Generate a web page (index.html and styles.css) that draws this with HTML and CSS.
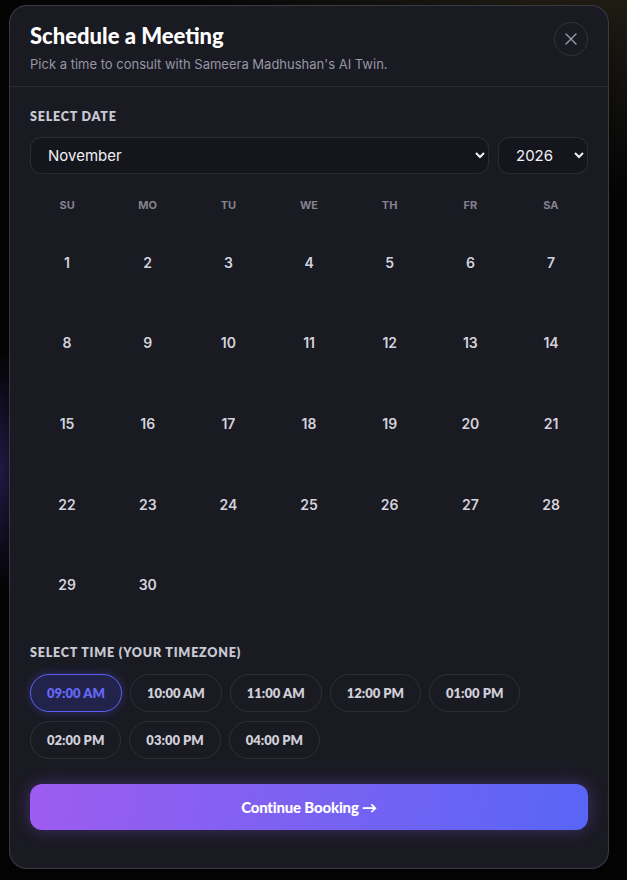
FILE: index.html
```html
<!DOCTYPE html>
<html>
<head>
<meta charset="utf-8">
<meta name="viewport" content="width=device-width, initial-scale=1">
<title>Schedule a Meeting</title>
<link rel="stylesheet" href="styles.css">
</head>
<body>
<div class="modal">
  <div class="modalHead">
    <div>
      <h2 class="modalTitle">Schedule a Meeting</h2>
      <p class="modalSub">Pick a time to consult with Sameera Madhushan's AI Twin.</p>
    </div>
    <button class="closeBtn" title="Close">
      <svg width="14" height="14" viewBox="0 0 14 14"><path d="M2 2L12 12M12 2L2 12" stroke="#9a9aa8" stroke-width="1.4" stroke-linecap="round"/></svg>
    </button>
  </div>
  <div class="modalBody">
    <div class="label">Select Date</div>
    <div class="pickRow">
      <select class="pick month" id="month">
        <option>January</option><option>February</option><option>March</option>
        <option>April</option><option>May</option><option>June</option>
        <option>July</option><option>August</option><option>September</option>
        <option>October</option><option selected>November</option><option>December</option>
      </select>
      <select class="pick year" id="year">
        <option>2025</option><option selected>2026</option><option>2027</option>
      </select>
    </div>
    <div class="weekRow">
      <span>Su</span><span>Mo</span><span>Tu</span><span>We</span><span>Th</span><span>Fr</span><span>Sa</span>
    </div>
    <div class="days" id="days"></div>

    <div class="label timeLabel">Select Time (Your Timezone)</div>
    <div class="slots" id="slots"></div>

    <button class="goBtn">Continue Booking &rarr;</button>
  </div>
</div>
<script>
  // fill the month grid, nov 2026 starts on a sunday
  var daysEl = document.getElementById("days");
  var first = new Date(2026, 10, 1).getDay();
  var count = new Date(2026, 11, 0).getDate();
  for (var i = 0; i < first; i++) {
    daysEl.appendChild(document.createElement("span"));
  }
  for (var d = 1; d <= count; d++) {
    var c = document.createElement("span");
    c.className = "day";
    c.textContent = d;
    daysEl.appendChild(c);
  }

  var times = ["09:00 AM","10:00 AM","11:00 AM","12:00 PM","01:00 PM","02:00 PM","03:00 PM","04:00 PM"];
  var slotsEl = document.getElementById("slots");
  times.forEach(function(t, n){
    var b = document.createElement("button");
    b.className = "slot" + (n == 0 ? " picked" : "");
    b.textContent = t;
    b.onclick = function(){
      document.querySelectorAll(".slot").forEach(function(s){ s.classList.remove("picked"); });
      b.classList.add("picked");
    };
    slotsEl.appendChild(b);
  });
</script>
</body>
</html>
```

FILE: styles.css
```css
*{box-sizing:border-box;}
html,body{height:100%;}
body{
  margin:0;
  font-family:Inter,"Liberation Sans",sans-serif;
  background:
    radial-gradient(ellipse 60px 120px at 0px 470px, rgba(70,55,150,0.55), transparent),
    radial-gradient(ellipse 400px 200px at 560px 0px, rgba(40,36,26,0.9), transparent),
    #050506;
  color:#e6e6ee;
  overflow:hidden;
}
.modal{
  width:600px;
  margin:5px 0 0 9px;
  height:864px;
  background:#1a1a23;
  border:1px solid rgba(255,255,255,0.14);
  border-radius:18px;
  box-shadow:0 10px 40px rgba(0,0,0,0.6);
}
.modalHead{
  display:flex;
  justify-content:space-between;
  align-items:flex-start;
  padding:16px 20px 13px 20px;
  border-bottom:1px solid rgba(255,255,255,0.08);
}
.modalTitle{
  margin:0;
  font-family:Lato,"Liberation Sans",sans-serif;
  font-weight:900;
  font-size:22px;
  line-height:28px;
  color:#fff;
}
.modalSub{
  margin:5px 0 0;
  font-size:13px;
  line-height:18px;
  color:#9696a4;
}
.closeBtn{
  width:34px;height:34px;
  border-radius:50%;
  border:1px solid rgba(255,255,255,0.1);
  background:transparent;
  display:flex;align-items:center;justify-content:center;
  padding:0;
  cursor:pointer;
}
.modalBody{
  padding:22px 20px 0 20px;
}
.label{
  font-family:Lato,"Liberation Sans",sans-serif;
  font-weight:800;
  font-size:12.5px;
  line-height:16px;
  letter-spacing:0.8px;
  text-transform:uppercase;
  color:#c9c9d3;
}
.pickRow{
  display:flex;
  gap:9px;
  margin-top:12px;
}
.pick{
  height:37px;
  color-scheme:dark;
  background:#15151d;
  color:#f1f1f5;
  border:1px solid rgba(255,255,255,0.09);
  border-radius:11px;
  font-family:Inter,"Liberation Sans",sans-serif;
  font-size:15px;
  padding:0 6px 0 13px;
}
.month{flex:1;}
.year{width:90px;}
.weekRow,.days{
  display:grid;
  grid-template-columns:repeat(7,1fr);
  column-gap:6.5px;
}
.weekRow{
  margin-top:20px;
  height:21px;
  align-items:center;
  text-align:center;
  font-size:11px;
  font-weight:700;
  color:#83838f;
  text-transform:uppercase;
}
.days{
  margin-top:10px;
  row-gap:6.5px;
}
.days span{
  aspect-ratio:1;
  display:flex;align-items:center;justify-content:center;
  font-size:14px;
  font-weight:600;
  color:#d3d3dc;
  border-radius:12px;
}
.timeLabel{margin-top:23px;}
.slots{
  display:flex;
  flex-wrap:wrap;
  gap:9px 8px;
  margin-top:13px;
}
.slot{
  height:38px;
  padding:0 16px;
  border-radius:19px;
  border:1px solid rgba(255,255,255,0.09);
  background:transparent;
  color:#cfcfd8;
  font-family:Lato,"Liberation Sans",sans-serif;
  font-weight:800;
  font-size:13px;
  cursor:pointer;
}
.slot.picked{
  border-color:#5b5ff0;
  background:#22234a;
  color:#6468f5;
  box-shadow:0 0 10px rgba(90,95,240,0.35);
}
.goBtn{
  display:block;
  width:100%;
  height:46px;
  margin-top:25px;
  border:0;
  border-radius:12px;
  background:linear-gradient(100deg,#9d5cf0 0%,#7a62f2 50%,#5865f6 100%);
  box-shadow:0 0 16px rgba(140,90,240,0.35);
  color:#fff;
  font-family:Lato,"Liberation Sans",sans-serif;
  font-weight:900;
  font-size:15px;
  letter-spacing:-0.2px;
  cursor:pointer;
}
```
